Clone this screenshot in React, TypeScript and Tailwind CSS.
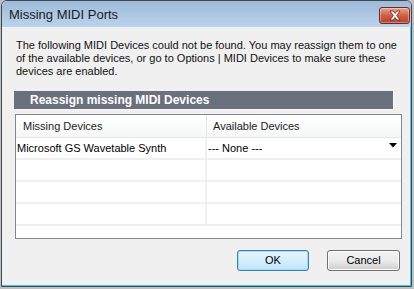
export default function App() {
  const rows = [
    { missing: "Microsoft GS Wavetable Synth", available: "--- None ---" },
    { missing: "", available: "" },
    { missing: "", available: "" },
    { missing: "", available: "" },
  ];

  return (
    <div className="h-[289px] w-[414px] overflow-hidden bg-[#bfbfbf] font-['Liberation_Sans',sans-serif] text-[11px] text-black">
      {/* window frame */}
      <div className="ml-px flex h-[287px] w-[411px] flex-col rounded-t-[6px] border border-[#3e4650] bg-[#f0f0f0]">
        {/* title bar */}
        <div className="flex h-[26px] shrink-0 items-start justify-between rounded-t-[5px] bg-gradient-to-b from-[#9cbad9] to-[#bcd4ec] pl-[7px] pr-[1px]">
          <span className="mt-[6px] text-[13px] leading-[15px] text-[#1b1b1b]">
            Missing MIDI Ports
          </span>
          <button
            type="button"
            className="mt-[6px] flex h-[17px] w-[31px] items-center justify-center rounded-[3px] border border-[#6e2a1e] bg-gradient-to-b from-[#e6a394] via-[#cf5f45] to-[#b8402a] shadow-[inset_0_0_0_1px_rgba(255,255,255,0.35)]">
            <svg width="14" height="11" viewBox="0 0 14 11">
              <path
                d="M2 1h3l2 2.5L9 1h3L8.6 5.5 12 10H9L7 7.5 5 10H2l3.4-4.5z"
                fill="#ffffff"
                stroke="#5a2a22"
                strokeWidth="0.8"
                strokeLinejoin="round"
              />
            </svg>
          </button>
        </div>

        {/* client area */}
        <div className="flex flex-1 flex-col border-r border-b border-[#3ccbf0] bg-[#f0f0f0]">
          <p className="mt-[12px] ml-[14px] w-[392px] text-[11px] leading-[13px] text-[#111]">
            The following MIDI Devices could not be found. You may reassign
            them to one of the available devices, or go to Options | MIDI
            Devices to make sure these devices are enabled.
          </p>

          {/* section header */}
          <div className="mt-[13px] ml-[12px] flex h-[19px] w-[380px] items-center border-r border-b border-[#fafafa] bg-[#6b707d] pl-[16px] text-[12px] font-bold text-white">
            Reassign missing MIDI Devices
          </div>

          {/* device grid */}
          <div className="mt-[4px] ml-[13px] h-[125px] w-[387px] overflow-hidden border border-[#828790] bg-white">
            <div className="flex h-[23px] border-b border-[#e5e5e5] bg-gradient-to-b from-white to-[#f5f6f7] text-[#1e1e1e]">
              <div className="flex w-[191px] items-center border-r border-[#e5e5e5] pl-[7px]">
                Missing Devices
              </div>
              <div className="flex flex-1 items-center pl-[6px]">
                Available Devices
              </div>
            </div>
            {rows.map((row, i) => (
              <div key={i} className="flex h-[22px] border-b-2 border-[#f0f0f0]">
                <div className="flex w-[191px] items-center border-r-2 border-[#f0f0f0] pl-px">
                  {row.missing}
                </div>
                <div className="flex flex-1 items-center justify-between pr-[4px] pl-px">
                  <span>{row.available}</span>
                  {i === 0 && (
                    <svg width="8" height="5" viewBox="0 0 8 5" className="-mt-[5px]">
                      <path d="M0 0h8L4 4.5z" fill="#000" />
                    </svg>
                  )}
                </div>
              </div>
            ))}
          </div>

          {/* buttons */}
          <div className="mt-[11px] mr-[10px] flex justify-end gap-[18px]">
            <button
              type="button"
              className="h-[21px] w-[72px] rounded-[3px] border border-[#3c7fb1] bg-gradient-to-b from-[#eaf6fd] to-[#bee6fd] text-[11px] text-black shadow-[inset_0_0_0_1px_#a7d8f5]">
              OK
            </button>
            <button
              type="button"
              className="h-[21px] w-[73px] rounded-[3px] border border-[#707070] bg-gradient-to-b from-[#f2f2f2] via-[#ebebeb] to-[#cfcfcf] text-[11px] text-black shadow-[inset_0_0_0_1px_#fcfcfc]">
              Cancel
            </button>
          </div>
        </div>
      </div>
    </div>
  );
}
